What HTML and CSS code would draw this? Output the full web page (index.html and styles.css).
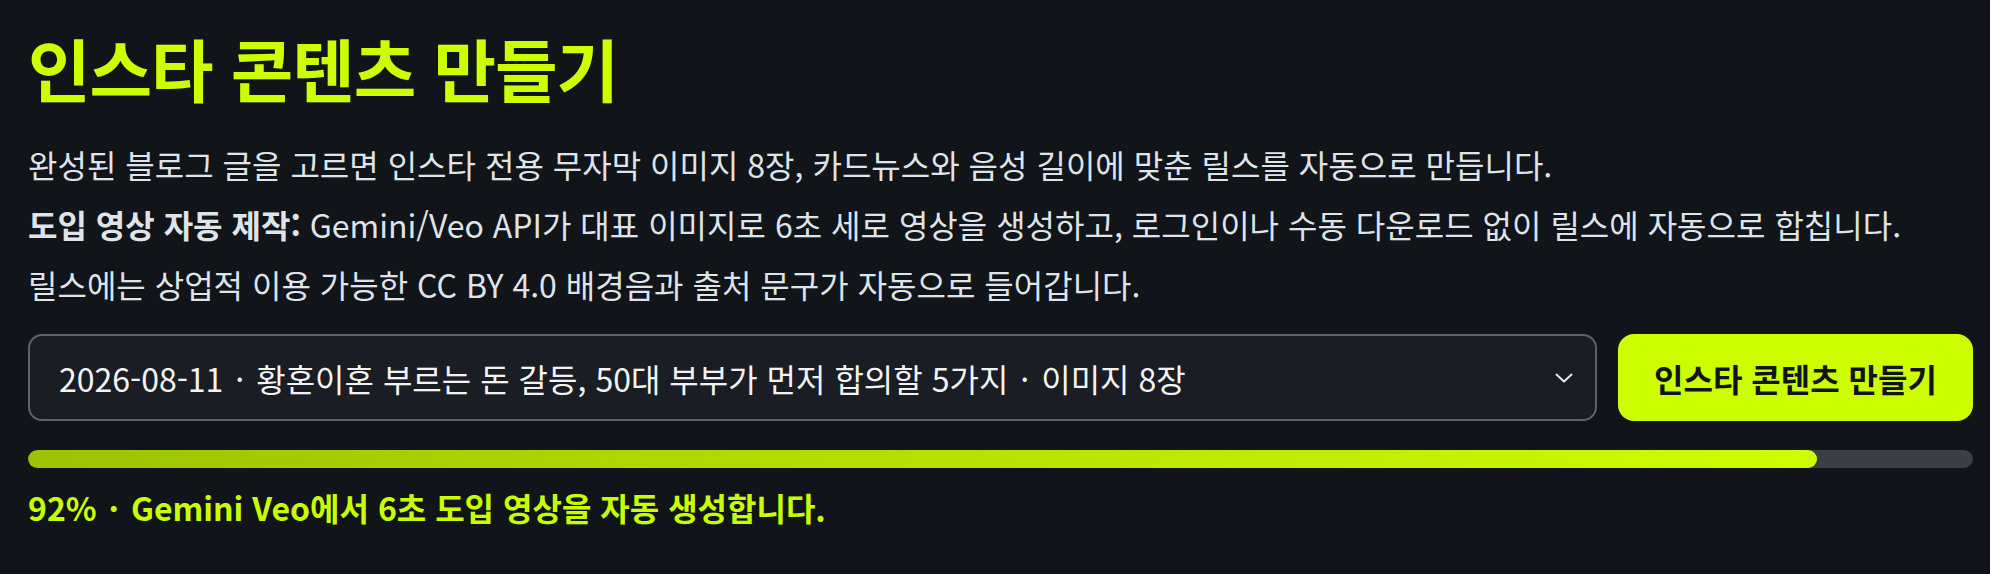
FILE: index.html
```html
<!DOCTYPE html>
<html lang="ko">
<head>
<meta charset="utf-8">
<title>인스타 콘텐츠 만들기</title>
<link rel="stylesheet" href="styles.css">
</head>
<body>
<main class="page">
  <h1 class="title">인스타 콘텐츠 만들기</h1>
  <div class="intro">
    <p>완성된 블로그 글을 고르면 인스타 전용 무자막 이미지 8장, 카드뉴스와 음성 길이에 맞춘 릴스를 자동으로 만듭니다.</p>
    <p><strong>도입 영상 자동 제작:</strong> Gemini/Veo API가 대표 이미지로 6초 세로 영상을 생성하고, 로그인이나 수동 다운로드 없이 릴스에 자동으로 합칩니다.</p>
    <p>릴스에는 상업적 이용 가능한 CC BY 4.0 배경음과 출처 문구가 자동으로 들어갑니다.</p>
  </div>
  <div class="controls">
    <div class="select" role="combobox" aria-expanded="false">
      <span class="select-value">2026-08-11 <span class="sep">·</span> 황혼이혼 부르는 돈 갈등, 50대 부부가 먼저 합의할 5가지 <span class="sep">·</span> 이미지 8장</span>
      <svg class="chevron" width="18" height="10" viewBox="0 0 18 10" aria-hidden="true"><path d="M1.5 1.5 L9 8.5 L16.5 1.5" fill="none" stroke="#e6e8ec" stroke-width="2" stroke-linecap="round" stroke-linejoin="round"/></svg>
    </div>
    <button class="make-btn" type="button">인스타 콘텐츠 만들기</button>
  </div>
  <div class="progress"><div class="progress-fill" style="width:92%"></div></div>
  <p class="status">92% <span class="sep">·</span> Gemini Veo에서 6초 도입 영상을 자동 생성합니다.</p>
</main>
</body>
</html>
```
FILE: styles.css
```css
* { box-sizing: border-box; }
html, body { margin: 0; background: #111418; }
body {
  font-family: "Noto Sans CJK KR", "Noto Sans", sans-serif;
  color: #dfe3ea;
}
.page {
  padding: 24px 17px 0 28px;
}
.title {
  margin: 0;
  font-size: 68px;
  line-height: 88px;
  font-weight: 700;
  letter-spacing: -1px;
  color: #ccff00;
}
.intro {
  margin-top: 22px;
}
.intro p {
  margin: 0;
  font-size: 32px;
  line-height: 60px;
}
.intro strong { font-weight: 700; }
.sep { margin: 0 3px; }
.controls {
  margin-top: 20px;
  display: flex;
  gap: 21px;
  height: 87px;
}
.select {
  flex: 1;
  display: flex;
  align-items: center;
  justify-content: space-between;
  padding: 0 22px 0 29px;
  background: #1a1d23;
  border: 2px solid #5d6168;
  border-radius: 14px;
  font-size: 32px;
  color: #f2f3f5;
}
.chevron { flex: none; }
.make-btn {
  flex: none;
  width: 355px;
  border: 0;
  border-radius: 16px;
  background: #ccff00;
  color: #111418;
  font-family: inherit;
  font-size: 32px;
  font-weight: 700;
}
.progress {
  margin-top: 29px;
  height: 18px;
  border-radius: 9px;
  background: #3a3e45;
  overflow: hidden;
}
.progress-fill {
  height: 100%;
  border-radius: 9px;
  background: linear-gradient(90deg, #9cc300, #ccff00);
}
.status {
  margin: 16px 0 0;
  font-size: 32px;
  font-weight: 700;
  color: #c8ff00;
}
```
